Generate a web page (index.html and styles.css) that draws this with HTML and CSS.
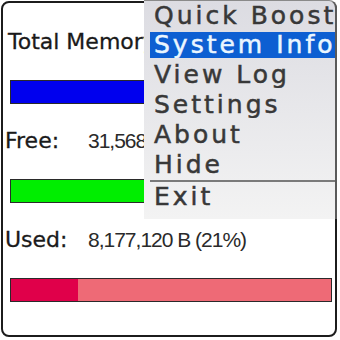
FILE: index.html
```html
<!DOCTYPE html>
<html>
<head>
<meta charset="utf-8">
<link rel="stylesheet" href="styles.css">
</head>
<body>
<div class="frame">
  <div class="line total clip">Total Memory: 39,745,536 B</div>
  <div class="bar"><div class="fill blue" style="width:100%"></div></div>
  <div class="line clip"><span class="label">Free:</span><span class="num">31,568,416 B (79%)</span></div>
  <div class="bar"><div class="fill green" style="width:100%"></div></div>
  <div class="line"><span class="label">Used:</span><span class="num">8,177,120 B (21%)</span></div>
  <div class="bar red-bg"><div class="fill red" style="width:21%"></div></div>
</div>
<div class="menu">
  <div class="item"><span>Quick Boost</span></div>
  <div class="item selected"><span>System Info</span></div>
  <div class="item"><span>View Log</span></div>
  <div class="item"><span>Settings</span></div>
  <div class="item"><span>About</span></div>
  <div class="item"><span>Hide</span></div>
  <div class="sep"></div>
  <div class="item"><span>Exit</span></div>
</div>
</body>
</html>
```
FILE: styles.css
```css
html, body {
  margin: 0;
  padding: 0;
  width: 340px;
  height: 340px;
  background: #ffffff;
  overflow: hidden;
}
body {
  position: relative;
  font-family: "DejaVu Sans", sans-serif;
}
.frame {
  position: absolute;
  left: 1px;
  top: 1px;
  width: 336px;
  height: 336px;
  border: 2px solid #1c1c1c;
  border-radius: 8px;
  display: flex;
  flex-direction: column;
  padding-top: 26px;
  box-sizing: border-box;
  overflow: hidden;
}
.line {
  font-size: 22px;
  line-height: 26px;
  height: 26px;
  color: #1a1a1a;
  padding-left: 2px;
  white-space: nowrap;
  display: flex;
  flex: none;
  -webkit-text-stroke: 0.3px #1a1a1a;
}
.line.total {
  padding-left: 5px;
}
.line.clip {
  width: 141px;
  box-sizing: border-box;
  overflow: hidden;
}
.label {
  width: 83px;
  flex: none;
}
.num {
  font-family: "Liberation Sans", sans-serif;
  font-size: 21px;
  letter-spacing: -1px;
  color: #2a2a2a;
  -webkit-text-stroke: 0;
}
.bar {
  margin: 25px 0 24px 7px;
  width: 320px;
  height: 22px;
  border: 1px solid #2a2a2a;
  display: flex;
  flex: none;
}
.fill { height: 100%; }
.blue { background: #0000ee; }
.green { background: #00ee00; }
.red-bg { background: #ee6a76; }
.red { background: #e0004a; }
.menu {
  position: absolute;
  left: 144px;
  top: 0;
  width: 193px;
  height: 219px;
  border-right: 2px solid #5a5a5a;
  border-top: 1px solid #8a8a8a;
  border-top-right-radius: 8px;
  background: linear-gradient(#dcdce2, #f3f3f3);
  box-sizing: border-box;
  display: flex;
  flex-direction: column;
}
.item {
  height: 30px;
  padding: 2px 0 2px 6px;
  box-sizing: border-box;
  flex: none;
}
.item:first-child {
  height: 29px;
}
.item span {
  display: block;
  height: 26px;
  line-height: 26px;
  font-size: 25px;
  letter-spacing: 3px;
  color: #383838;
  -webkit-text-stroke: 0.5px #383838;
  padding-left: 4px;
  white-space: nowrap;
  overflow: hidden;
}
.item.selected span {
  background: #0d5fd2;
  color: #eaf6ff;
  -webkit-text-stroke: 0.5px #eaf6ff;
}
.sep {
  margin-left: 6px;
  height: 2px;
  background: #7a7a7a;
  flex: none;
}
```
